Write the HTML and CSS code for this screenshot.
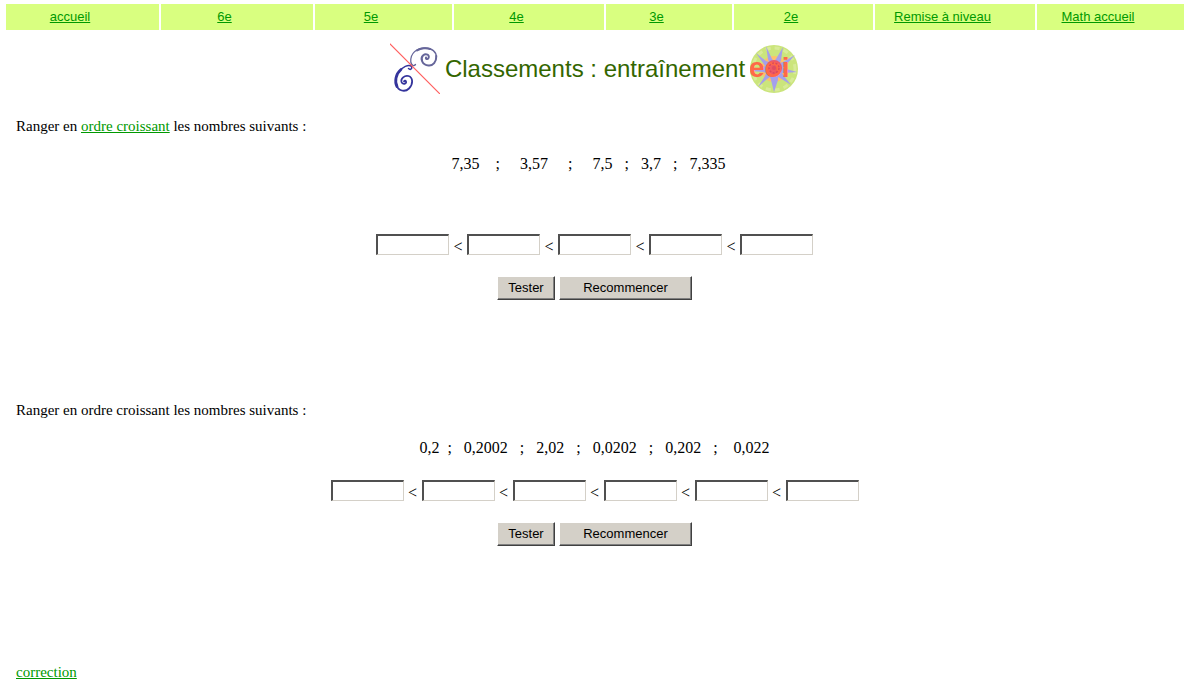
FILE: index.html
```html
<!DOCTYPE html>
<html lang="fr">
<head>
<meta charset="utf-8">
<title>Classements : entraînement</title>
<link rel="stylesheet" href="styles.css">
</head>
<body>
<nav class="menu">
  <div class="menu-cell"><a href="#">accueil</a></div>
  <div class="menu-cell"><a href="#">6e</a></div>
  <div class="menu-cell"><a href="#">5e</a></div>
  <div class="menu-cell"><a href="#">4e</a></div>
  <div class="menu-cell"><a href="#">3e</a></div>
  <div class="menu-cell"><a href="#">2e</a></div>
  <div class="menu-cell"><a href="#">Remise à niveau</a></div>
  <div class="menu-cell"><a href="#">Math accueil</a></div>
</nav>
<header class="heading">
  <svg class="logo" width="50" height="51" viewBox="0 0 50 51" fill="none" stroke-linecap="round" aria-hidden="true">
    <g stroke="#34349c">
      <path stroke-width="1.5" d="M18.500 25.500C20.500 27.500 22.500 25.500 21.500 23.500C19 21 12 23.500 8 30"/>
      <path stroke-width="2.800" d="M11 26.500C5.500 31 4.500 39 7 43.500"/>
      <path stroke-width="1.800" d="M6.500 42C8 48 15 49.500 19 45.500C23.500 41 23 34.500 18.500 33C14.500 32 10.500 35.500 11.500 39C12.500 42 17 41 16 38.500C15.500 37.500 14.500 37.500 14 38.500"/>
    </g>
    <g stroke="#66669a">
      <path stroke-width="1.300" d="M25.500 21.500C24 23.500 21.500 22.500 20.800 19C20 10 27 5 35 5C42 5 46.500 9 46.300 14"/>
      <path stroke-width="2" d="M46.300 13C46.500 19 43 23 38.500 22.500C32 22 30 15.500 33 12.500C36 10 40 12 38.500 15C37.500 16.800 35.500 16 36 14.500"/>
      <path stroke-width="2" d="M27 7.500C31 4.800 37 4.600 40 6"/>
    </g>
    <path stroke="#ff6060" stroke-width="1.200" d="M0 1L50 51"/>
  </svg>
  <h1>Classements : entraînement</h1>
  <svg class="logo" width="49" height="50" viewBox="0 0 49 50" aria-hidden="true">
    <circle cx="24" cy="25" r="24" fill="#cbe57c"/>
    <circle cx="24" cy="25" r="21" fill="none" stroke="#d8eb98" stroke-width="3" stroke-dasharray="5 4"/>
    <circle cx="24" cy="25" r="13" fill="#ffbf6a"/>
    <path fill="#a5a0ea" d="M16 2L22 15L24 17L26 15L33 3L31 16L30 19L33 18L45 11L35 22L33 24L36 25L47 28L35 29L32 29L34 32L41 41L30 34L28 33L28 36L24 48L21 36L20 33L17 35L8 43L15 32L16 29L13 28L1 27L13 23L15 22L13 19L6 9L16 17L19 18L18 15Z"/>
    <circle cx="24" cy="24" r="8" fill="#ec5a66"/>
    <text class="logo-text" x="-1" y="33">eoi</text>
    <circle cx="24" cy="24" r="5" fill="none" stroke="#d84860" stroke-width="1.500" stroke-dasharray="2 1.500"/>
    <circle cx="24" cy="24" r="2" fill="#e04c60"/>
  </svg>
</header>
<main class="content">
  <form class="exercise first">
    <p>Ranger en <a href="#">ordre croissant</a> les nombres suivants :</p>
    <p class="numbers">7,35    ;     3,57     ;     7,5   ;   3,7   ;   7,335&nbsp;&nbsp;&nbsp;</p>
    <div class="answers">
      <input type="text" aria-label="Nombre 1"><span>&lt;</span>
      <input type="text" aria-label="Nombre 2"><span>&lt;</span>
      <input type="text" aria-label="Nombre 3"><span>&lt;</span>
      <input type="text" aria-label="Nombre 4"><span>&lt;</span>
      <input type="text" aria-label="Nombre 5">
    </div>
    <div class="actions"><button class="test" type="button">Tester</button><button class="reset" type="reset">Recommencer</button></div>
  </form>
  <form class="exercise">
    <p>Ranger en ordre croissant les nombres suivants :</p>
    <p class="numbers">0,2  ;   0,2002   ;   2,02   ;   0,0202   ;   0,202   ;    0,022</p>
    <div class="answers">
      <input type="text" aria-label="Nombre 1"><span>&lt;</span>
      <input type="text" aria-label="Nombre 2"><span>&lt;</span>
      <input type="text" aria-label="Nombre 3"><span>&lt;</span>
      <input type="text" aria-label="Nombre 4"><span>&lt;</span>
      <input type="text" aria-label="Nombre 5"><span>&lt;</span>
      <input type="text" aria-label="Nombre 6">
    </div>
    <div class="actions"><button class="test" type="button">Tester</button><button class="reset" type="reset">Recommencer</button></div>
  </form>
  <p><a href="#">correction</a></p>
</main>
</body>
</html>
```
FILE: styles.css
```css
body {
  margin: 0;
  background: #fff;
  color: #000;
  font: 16px/20px "Liberation Serif", "Times New Roman", serif;
}
a { color: #090; }
.menu {
  display: grid;
  grid-template-columns: 153fr 152fr 137fr 150fr 126fr 139fr 160fr 147fr;
  gap: 2px;
  padding: 4px 5px 0 6px;
  font: 13px/26px "Liberation Sans", Arial, sans-serif;
}
.menu-cell {
  padding-right: 25px;
  background: #d9ff80;
  text-align: center;
  white-space: nowrap;
}
.heading {
  display: flex;
  justify-content: center;
  align-items: center;
  gap: 5px;
  margin-top: 13px;
}
.heading h1 {
  margin: 0;
  color: #360;
  font: 24px/28px "Liberation Sans", Arial, sans-serif;
}
.logo { flex: none; }
.logo-text {
  fill: #ff6848;
  font: bold 28px "Liberation Sans", Arial, sans-serif;
}
.content { padding: 22px 16px 16px; }
.content p { margin: 0; font-size: 15px; }
.content .numbers {
  margin-top: 18px;
  font-size: 16px;
  text-align: center;
  white-space: pre-wrap;
}
.answers {
  display: flex;
  flex-wrap: wrap;
  justify-content: center;
  align-items: flex-end;
  gap: 4px;
  margin-top: 22px;
}
.first .answers { margin-top: 60px; }
.answers span { width: 10px; text-align: center; line-height: 16px; }
.answers input {
  box-sizing: border-box;
  width: 73px;
  height: 21px;
  padding: 1px;
  border: 2px solid;
  border-width: 2px 1px 1px 2px;
  border-color: #505050 #d4d0c8 #d4d0c8 #505050;
  background: #fff;
}
.actions {
  display: flex;
  justify-content: center;
  gap: 4px;
  margin-top: 21px;
}
.actions button {
  height: 24px;
  padding: 0 0 2px;
  border: 1px solid;
  border-color: #fff #404040 #404040 #fff;
  box-shadow: inset -1px -1px #808080;
  background: #d4d0c8;
  color: #000;
  font: 13px "Liberation Sans", Arial, sans-serif;
}
.test { width: 58px; }
.reset { width: 133px; }
.exercise { margin-bottom: 100px; }
.exercise + p { margin-top: 116px; }
```
